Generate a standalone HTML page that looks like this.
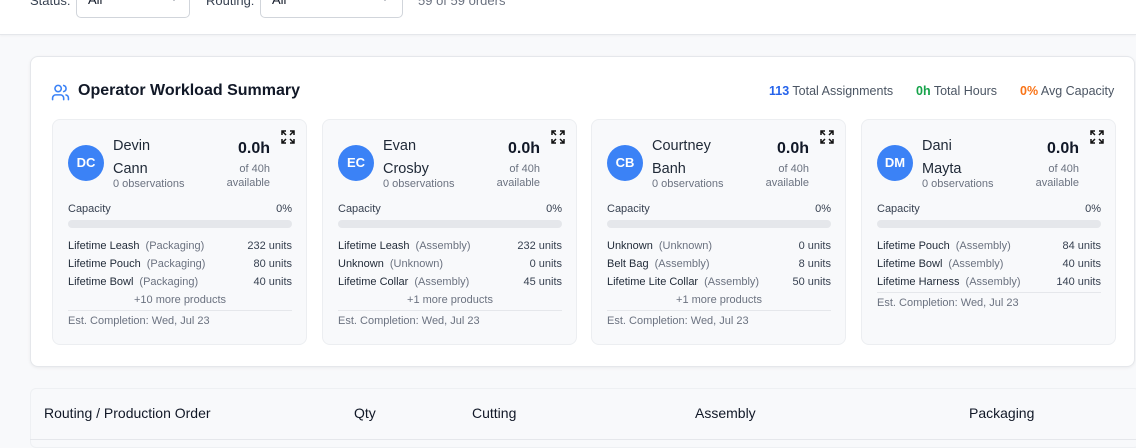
<!DOCTYPE html>
<html><head><style>
*{box-sizing:border-box;margin:0;padding:0}
body{width:1136px;height:443px;overflow:hidden;background:#f8f9fb;font-family:"Liberation Sans",Arial,sans-serif;color:#111827;position:relative}
.abs{position:absolute;white-space:nowrap}
.top{position:absolute;left:0;top:0;width:1136px;height:35px;background:#fff;border-bottom:1px solid #e5e7eb;box-shadow:0 1px 2px rgba(0,0,0,.04)}
.sel{position:absolute;top:-12px;height:30px;border:1px solid #d1d5db;border-radius:5px;background:#fff}
.sum{position:absolute;left:30px;top:56px;width:1105px;height:311px;background:#fff;border:1px solid #e5e7eb;border-radius:8px;box-shadow:0 1px 3px rgba(0,0,0,.06)}
.card{position:absolute;top:119px;width:255px;height:226px;background:#f8f9fb;border:1px solid #eceef1;border-radius:8px}
.av{position:absolute;left:15px;top:25px;width:36px;height:36px;border-radius:50%;background:#3b82f6;color:#fff;font-weight:bold;font-size:13px;text-align:center;line-height:36px}
.nm{position:absolute;left:60px;top:15px;font-size:14.5px;line-height:23px;color:#1f2937}
.obs{position:absolute;left:60px;top:58px;font-size:11px;color:#6b7280}
.hrs{position:absolute;right:36px;top:18px;text-align:right}
.hrs b{font-size:16px;display:block;line-height:22px;margin-bottom:2px}
.hrs span{font-size:11px;color:#6b7280;line-height:14px;display:block}
.exp{position:absolute;right:11px;top:10px}
.cap{position:absolute;left:15px;right:14px;top:83px;font-size:11px;color:#374151;display:flex;justify-content:space-between}
.bar{position:absolute;left:15px;right:14px;top:100px;height:8px;border-radius:4px;background:#e5e7eb}
.rows{position:absolute;left:15px;right:14px;top:117px;font-size:11px;color:#1f2937}
.r{display:flex;justify-content:space-between;height:18px;line-height:18px}
.r i{font-style:normal;color:#6b7280;margin-left:6px}
.r em{font-style:normal;color:#374151}
.more{text-align:center;color:#6b7280;height:18px;line-height:18px}
.est{border-top:1px solid #e5e7eb;margin-top:1px;padding-top:4px;color:#6b7280}
.tbl{position:absolute;left:30px;top:388px;width:1110px;height:60px;background:#f8f9fb;border:1px solid #eef0f3;border-radius:6px}
.th{position:absolute;top:405px;font-size:14px;color:#111827}
</style></head><body>
<div class="top">
<div class="abs" style="left:30px;top:-7px;font-size:13px;color:#374151">Status:</div>
<div class="sel" style="left:76px;width:114px"><span class="abs" style="left:11px;top:3px;font-size:13px">All</span><svg class="abs" style="left:92px;top:6px" width="10" height="8" viewBox="0 0 10 8"><path d="M1 1l4 4 4-4" fill="none" stroke="#6b7280" stroke-width="1.3"/></svg></div>
<div class="abs" style="left:206px;top:-7px;font-size:13px;color:#374151">Routing:</div>
<div class="sel" style="left:260px;width:143px"><span class="abs" style="left:11px;top:3px;font-size:13px">All</span><svg class="abs" style="left:119px;top:6px" width="10" height="8" viewBox="0 0 10 8"><path d="M1 1l4 4 4-4" fill="none" stroke="#6b7280" stroke-width="1.3"/></svg></div>
<div class="abs" style="left:418px;top:-7px;font-size:13px;color:#6b7280">59 of 59 orders</div>
</div>
<div class="sum"></div>
<svg class="abs" style="left:51px;top:83px" width="19" height="19" viewBox="0 0 24 24" fill="none" stroke="#3b82f6" stroke-width="2" stroke-linecap="round" stroke-linejoin="round"><path d="M16 21v-2a4 4 0 0 0-4-4H6a4 4 0 0 0-4 4v2"/><circle cx="9" cy="7" r="4"/><path d="M22 21v-2a4 4 0 0 0-3-3.87"/><path d="M16 3.13a4 4 0 0 1 0 7.75"/></svg>
<div class="abs" style="left:78px;top:82px;font-size:16px;font-weight:bold;color:#111827">Operator Workload Summary</div>
<div class="abs" style="left:769px;top:84px;font-size:12.5px;color:#4b5563"><b style="color:#2563eb">113</b> Total Assignments</div>
<div class="abs" style="left:916px;top:84px;font-size:12.5px;color:#4b5563"><b style="color:#16a34a">0h</b> Total Hours</div>
<div class="abs" style="left:1020px;top:84px;font-size:12.5px;color:#4b5563"><b style="color:#f97316">0%</b> Avg Capacity</div>

<div class="card" style="left:52px">
<div class="av">DC</div><div class="nm">Devin<br>Cann</div><div class="obs">0 observations</div>
<div class="hrs"><b>0.0h</b><span>of 40h</span><span>available</span></div>
<svg class="exp" width="14" height="14" viewBox="0 0 14 14" fill="none" stroke="#111" stroke-width="1.5"><path d="M1 5V1h4M1 1l4 4M13 5V1H9M13 1L9 5M1 9v4h4M1 13l4-4M13 9v4H9M13 13L9 9"/></svg>
<div class="cap"><span>Capacity</span><span>0%</span></div><div class="bar"></div>
<div class="rows">
<div class="r"><span>Lifetime Leash<i>(Packaging)</i></span><em>232 units</em></div>
<div class="r"><span>Lifetime Pouch<i>(Packaging)</i></span><em>80 units</em></div>
<div class="r"><span>Lifetime Bowl<i>(Packaging)</i></span><em>40 units</em></div>
<div class="more">+10 more products</div>
<div class="est">Est. Completion: Wed, Jul 23</div></div>
</div>

<div class="card" style="left:322px">
<div class="av">EC</div><div class="nm">Evan<br>Crosby</div><div class="obs">0 observations</div>
<div class="hrs"><b>0.0h</b><span>of 40h</span><span>available</span></div>
<svg class="exp" width="14" height="14" viewBox="0 0 14 14" fill="none" stroke="#111" stroke-width="1.5"><path d="M1 5V1h4M1 1l4 4M13 5V1H9M13 1L9 5M1 9v4h4M1 13l4-4M13 9v4H9M13 13L9 9"/></svg>
<div class="cap"><span>Capacity</span><span>0%</span></div><div class="bar"></div>
<div class="rows">
<div class="r"><span>Lifetime Leash<i>(Assembly)</i></span><em>232 units</em></div>
<div class="r"><span>Unknown<i>(Unknown)</i></span><em>0 units</em></div>
<div class="r"><span>Lifetime Collar<i>(Assembly)</i></span><em>45 units</em></div>
<div class="more">+1 more products</div>
<div class="est">Est. Completion: Wed, Jul 23</div></div>
</div>

<div class="card" style="left:591px">
<div class="av">CB</div><div class="nm">Courtney<br>Banh</div><div class="obs">0 observations</div>
<div class="hrs"><b>0.0h</b><span>of 40h</span><span>available</span></div>
<svg class="exp" width="14" height="14" viewBox="0 0 14 14" fill="none" stroke="#111" stroke-width="1.5"><path d="M1 5V1h4M1 1l4 4M13 5V1H9M13 1L9 5M1 9v4h4M1 13l4-4M13 9v4H9M13 13L9 9"/></svg>
<div class="cap"><span>Capacity</span><span>0%</span></div><div class="bar"></div>
<div class="rows">
<div class="r"><span>Unknown<i>(Unknown)</i></span><em>0 units</em></div>
<div class="r"><span>Belt Bag<i>(Assembly)</i></span><em>8 units</em></div>
<div class="r"><span>Lifetime Lite Collar<i>(Assembly)</i></span><em>50 units</em></div>
<div class="more">+1 more products</div>
<div class="est">Est. Completion: Wed, Jul 23</div></div>
</div>

<div class="card" style="left:861px">
<div class="av">DM</div><div class="nm">Dani<br>Mayta</div><div class="obs">0 observations</div>
<div class="hrs"><b>0.0h</b><span>of 40h</span><span>available</span></div>
<svg class="exp" width="14" height="14" viewBox="0 0 14 14" fill="none" stroke="#111" stroke-width="1.5"><path d="M1 5V1h4M1 1l4 4M13 5V1H9M13 1L9 5M1 9v4h4M1 13l4-4M13 9v4H9M13 13L9 9"/></svg>
<div class="cap"><span>Capacity</span><span>0%</span></div><div class="bar"></div>
<div class="rows">
<div class="r"><span>Lifetime Pouch<i>(Assembly)</i></span><em>84 units</em></div>
<div class="r"><span>Lifetime Bowl<i>(Assembly)</i></span><em>40 units</em></div>
<div class="r"><span>Lifetime Harness<i>(Assembly)</i></span><em>140 units</em></div>
<div class="est">Est. Completion: Wed, Jul 23</div></div>
</div>

<div class="tbl"></div>
<div class="abs" style="left:30px;top:439px;width:1110px;height:1px;background:#e5e7eb"></div>
<div class="th abs" style="left:44px">Routing / Production Order</div>
<div class="th abs" style="left:354px">Qty</div>
<div class="th abs" style="left:472px">Cutting</div>
<div class="th abs" style="left:695px">Assembly</div>
<div class="th abs" style="left:969px">Packaging</div>
</body></html>
